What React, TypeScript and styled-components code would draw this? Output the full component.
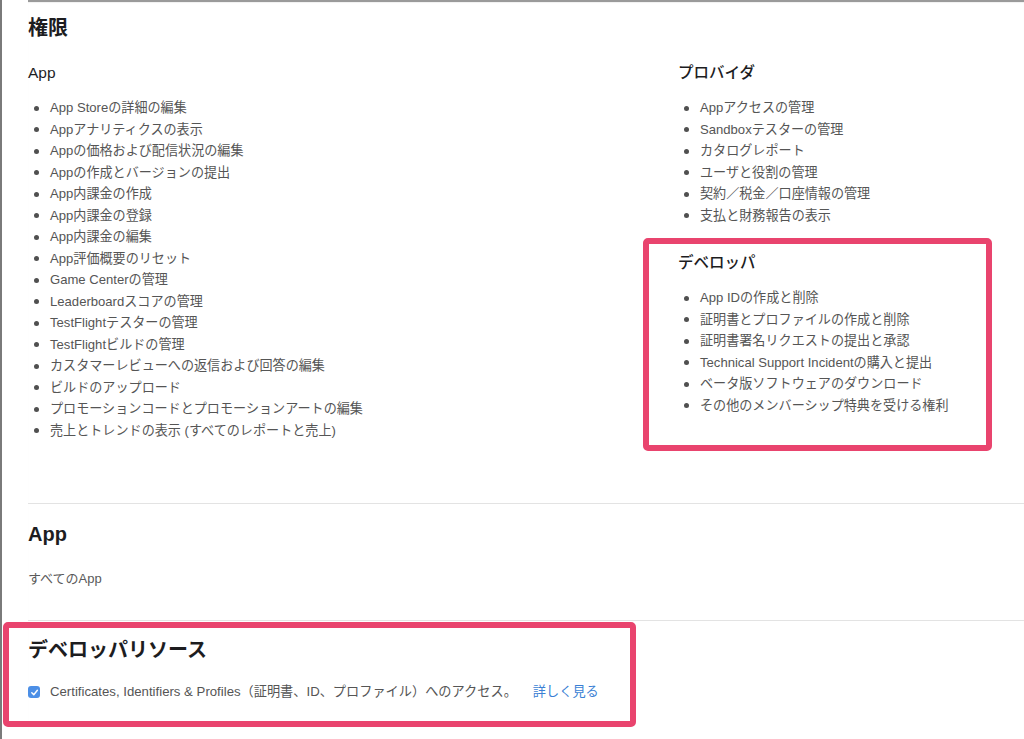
import React from "react";
import styled, { createGlobalStyle, css } from "styled-components";

const GlobalStyle = createGlobalStyle`
  html, body {
    margin: 0;
    padding: 0;
    background: #ffffff;
  }
  body {
    font-family: "Liberation Sans", "Noto Sans CJK JP", sans-serif;
    color: #1d1d1f;
  }
`;

const Frame = styled.div`
  min-height: 739px;
  box-sizing: border-box;
  border-left: 2px solid #7a7a7a;
  padding-left: 26px;
  overflow: hidden;
`;

const Inner = styled.div`
  border-top: 2px solid #9a9a9a;
  box-shadow: inset 0 1px 1px rgba(0, 0, 0, 0.06);
`;

const highlight = css`
  position: relative;

  &::after {
    content: "";
    position: absolute;
    border: 6px solid #e9446e;
    border-radius: 5px;
    pointer-events: none;
  }
`;

const Section = styled.section<{ $divider?: boolean; $pad: number }>`
  padding-top: ${(p) => p.$pad}px;
  border-top: ${(p) => (p.$divider ? "1px solid #e3e3e3" : "none")};
`;

const PermissionSection = styled(Section)`
  padding-bottom: 62px;
`;

const AppSection = styled(Section)`
  padding-bottom: 31px;
`;

const ResourceSection = styled(Section)`
  ${highlight}
  padding-bottom: 30px;

  &::after {
    left: -25px;
    top: 1px;
    width: 633px;
    height: 105px;
    box-sizing: border-box;
  }
`;

const Title = styled.h2`
  margin: 0;
  font-size: 20px;
  line-height: 24px;
  font-weight: 700;
  color: #1d1d1f;
`;

const Columns = styled.div`
  display: grid;
  grid-template-columns: 650px 1fr;
  margin-top: 23px;
`;

const Group = styled.div<{ $gap?: number }>`
  margin-top: ${(p) => p.$gap ?? 0}px;
`;

const DeveloperGroup = styled(Group)`
  ${highlight}

  &::after {
    left: -35px;
    top: -15px;
    right: 32px;
    bottom: -35px;
  }
`;

const GroupTitle = styled.h3`
  margin: 0;
  font-size: 15.5px;
  line-height: 20px;
  font-weight: 500;
  color: #1d1d1f;
`;

const List = styled.ul`
  list-style: none;
  margin: 14px 0 0;
  padding: 0;
`;

const Item = styled.li`
  position: relative;
  padding-left: 22px;
  font-size: 13.1px;
  line-height: 21.5px;
  color: #555555;
  white-space: nowrap;

  &::before {
    content: "";
    position: absolute;
    left: 6px;
    top: 8.5px;
    width: 5px;
    height: 5px;
    border-radius: 50%;
    background: #505050;
  }
`;

const Note = styled.p`
  margin: 23px 0 0;
  font-size: 13px;
  line-height: 20px;
  color: #5a5a5a;
`;

const CheckRow = styled.label`
  display: flex;
  align-items: center;
  margin-top: 20px;
  font-size: 13.2px;
  line-height: 20px;
  color: #555555;
  white-space: nowrap;
`;

const CheckBox = styled.span`
  display: inline-flex;
  align-items: center;
  justify-content: center;
  width: 12px;
  height: 12px;
  border-radius: 3px;
  background: #4c8fe6;
  margin-right: 10px;
  flex-shrink: 0;
`;

const MoreLink = styled.a`
  margin-left: 16px;
  color: #3a7fd4;
  text-decoration: none;
`;

const appItems = [
  "App Storeの詳細の編集",
  "Appアナリティクスの表示",
  "Appの価格および配信状況の編集",
  "Appの作成とバージョンの提出",
  "App内課金の作成",
  "App内課金の登録",
  "App内課金の編集",
  "App評価概要のリセット",
  "Game Centerの管理",
  "Leaderboardスコアの管理",
  "TestFlightテスターの管理",
  "TestFlightビルドの管理",
  "カスタマーレビューへの返信および回答の編集",
  "ビルドのアップロード",
  "プロモーションコードとプロモーションアートの編集",
  "売上とトレンドの表示 (すべてのレポートと売上)",
];

const providerItems = [
  "Appアクセスの管理",
  "Sandboxテスターの管理",
  "カタログレポート",
  "ユーザと役割の管理",
  "契約／税金／口座情報の管理",
  "支払と財務報告の表示",
];

const developerItems = [
  "App IDの作成と削除",
  "証明書とプロファイルの作成と削除",
  "証明書署名リクエストの提出と承認",
  "Technical Support Incidentの購入と提出",
  "ベータ版ソフトウェアのダウンロード",
  "その他のメンバーシップ特典を受ける権利",
];

const Bullets: React.FC<{ items: string[] }> = ({ items }) => (
  <List>
    {items.map((text) => (
      <Item key={text}>{text}</Item>
    ))}
  </List>
);

export default function App() {
  return (
    <>
      <GlobalStyle />
      <Frame>
        <Inner>
          <PermissionSection $pad={14}>
            <Title>権限</Title>
            <Columns>
              <Group>
                <GroupTitle>App</GroupTitle>
                <Bullets items={appItems} />
              </Group>
              <div>
                <Group>
                  <GroupTitle>プロバイダ</GroupTitle>
                  <Bullets items={providerItems} />
                </Group>
                <DeveloperGroup $gap={27}>
                  <GroupTitle>デベロッパ</GroupTitle>
                  <Bullets items={developerItems} />
                </DeveloperGroup>
              </div>
            </Columns>
          </PermissionSection>

          <AppSection $divider $pad={18}>
            <Title>App</Title>
            <Note>すべてのApp</Note>
          </AppSection>

          <ResourceSection $divider $pad={17}>
            <Title>デベロッパリソース</Title>
            <CheckRow>
              <CheckBox>
                <svg width="9" height="9" viewBox="0 0 10 10" fill="none">
                  <path
                    d="M2 5.3 L4.2 7.5 L8.2 2.5"
                    stroke="#fff"
                    strokeWidth="1.6"
                    strokeLinecap="round"
                    strokeLinejoin="round"
                  />
                </svg>
              </CheckBox>
              Certificates, Identifiers &amp; Profiles（証明書、ID、プロファイル）へのアクセス。
              <MoreLink href="#">詳しく見る</MoreLink>
            </CheckRow>
          </ResourceSection>
        </Inner>
      </Frame>
    </>
  );
}
